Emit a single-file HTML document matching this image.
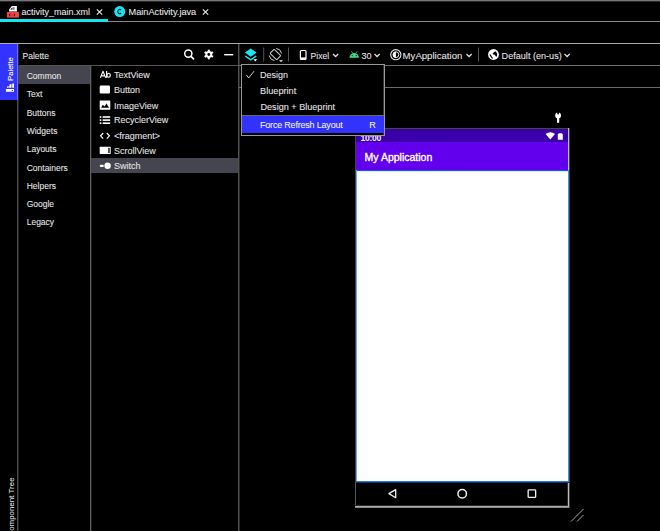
<!DOCTYPE html>
<html><head><meta charset="utf-8">
<style>
html,body{margin:0;padding:0;background:#000;width:660px;height:531px;overflow:hidden;position:relative;font-family:"Liberation Sans",sans-serif;}
.a{position:absolute;}
.t{position:absolute;white-space:pre;line-height:normal;color:#e4e4e4;-webkit-text-stroke:0.08px currentColor;}
.hl{position:absolute;height:1px;}
.vl{position:absolute;width:1px;}
svg{position:absolute;overflow:visible;}
</style></head><body>

<!-- top line -->
<div class="hl" style="left:0;top:0;width:660px;background:#777"></div>
<div class="hl" style="left:0;top:1px;width:660px;background:#2a2a2a"></div>

<!-- tab 1 -->
<svg style="left:0;top:0" width="30" height="22">
  <path d="M9 9.6L11.9 6.1H16.9V11.6H9z" fill="#fff"/>
  <path d="M10.3 9.5L12.5 7.2V9.5z" fill="#000"/>
  <rect x="13.5" y="7.2" width="0.8" height="2.6" fill="#000"/>
  <rect x="6.9" y="12" width="12" height="5.6" fill="#ee4646"/>
  <path d="M10.2 13.6l-0.9 1.3l0.9 1.3M13.9 13.6l0.9 1.3l-0.9 1.3" stroke="#3a0000" stroke-width="0.9" fill="none"/>
  <rect x="11.7" y="14.4" width="0.7" height="1" fill="#7a1010"/>
</svg>
<div class="t" style="left:21.5px;top:7px;font-size:9px;color:#e6e6e6">activity_main.xml</div>
<svg style="left:0;top:0" width="220" height="22">
  <path d="M96.8 9.3l5.4 5.4M102.2 9.3l-5.4 5.4" stroke="#f2f2f2" stroke-width="1.05"/>
  <circle cx="119.7" cy="11.6" r="5.5" fill="#18e6f2"/>
  <path d="M121.2 10.1a2.05 2.05 0 1 0 0 3" stroke="#003840" stroke-width="1.3" fill="none"/>
  <path d="M202.8 9.3l5.4 5.4M208.2 9.3l-5.4 5.4" stroke="#f2f2f2" stroke-width="1.05"/>
</svg>
<div class="t" style="left:128.5px;top:7px;font-size:9.2px;color:#e6e6e6">MainActivity.java</div>
<div class="a" style="left:0;top:19px;width:108px;height:3px;background:#18e4f0"></div>
<div class="hl" style="left:108px;top:21px;width:552px;background:#888"></div>

<!-- line under empty strip -->
<div class="hl" style="left:0;top:43px;width:660px;background:#aaa"></div>

<!-- blue side tab -->
<div class="a" style="left:0;top:44px;width:18px;height:56px;background:#3333ff"></div>
<div class="t" style="left:9.7px;top:68.7px;font-size:7.6px;color:#fff;transform:translate(-50%,-50%) rotate(-90deg);transform-origin:center">Palette</div>
<svg style="left:0;top:0" width="20" height="100">
  <rect x="5.9" y="89" width="8.1" height="2.7" rx="0.3" fill="#fff"/>
  <circle cx="12.4" cy="90.35" r="0.65" fill="#3333ff"/>
  <path d="M12.2 83.6h1.8v4.1h-1.8z" fill="#fff"/>
  <path d="M9.9 83.9l1.7 0.5l-0.2 3.3h-2.6z" fill="#fff"/>
  <path d="M7.6 85.9l1.3 0.5l-0.5 1.3h-1.6z" fill="#fff"/>
</svg>
<div class="t" style="left:10.6px;top:506.8px;font-size:7.95px;color:#ddd;transform:translate(-50%,-50%) rotate(-90deg);transform-origin:center">Component Tree</div>

<!-- palette panel lines -->
<div class="vl" style="left:17px;top:44px;height:487px;background:rgba(255,255,255,0.3)"></div>
<div class="vl" style="left:238px;top:44px;height:487px;background:#505050"></div><div class="vl" style="left:239px;top:44px;height:487px;background:#262626"></div>
<div class="hl" style="left:18px;top:65px;width:220px;background:#555"></div>
<div class="vl" style="left:90px;top:66px;height:465px;background:#606060"></div><div class="vl" style="left:91px;top:66px;height:465px;background:#1c1c1c"></div><div class="vl" style="left:18px;top:44px;height:487px;background:#222"></div>

<div class="t" style="left:22.5px;top:51px;font-size:8.5px">Palette</div>
<svg style="left:0;top:0" width="240" height="66">
  <circle cx="188.3" cy="53.6" r="3.6" stroke="#fff" stroke-width="1.5" fill="none"/>
  <path d="M190.8 56.2l3.2 3.2" stroke="#fff" stroke-width="1.7"/>
  <g transform="translate(208.8 54.5)">
    <circle r="3.4" fill="#fff"/>
    <path d="M-1 -4.8h2v9.6h-2z" fill="#fff" transform="rotate(0)"/>
    <path d="M-1 -4.8h2v9.6h-2z" fill="#fff" transform="rotate(60)"/>
    <path d="M-1 -4.8h2v9.6h-2z" fill="#fff" transform="rotate(120)"/>
    <circle r="1.4" fill="#000"/>
  </g>
  <rect x="224.2" y="54" width="9" height="1.4" fill="#fff"/>
</svg>

<!-- categories -->
<div class="a" style="left:18px;top:66px;width:72px;height:18px;background:#45454f"></div>
<div class="t" style="left:26.7px;top:70.8px;font-size:8.5px">Common</div>
<div class="t" style="left:26.7px;top:89.1px;font-size:8.5px">Text</div>
<div class="t" style="left:26.7px;top:107.9px;font-size:8.5px">Buttons</div>
<div class="t" style="left:26.7px;top:126.1px;font-size:8.5px">Widgets</div>
<div class="t" style="left:26.7px;top:144.3px;font-size:8.5px">Layouts</div>
<div class="t" style="left:26.7px;top:162.5px;font-size:8.5px">Containers</div>
<div class="t" style="left:26.7px;top:180.7px;font-size:8.5px">Helpers</div>
<div class="t" style="left:26.7px;top:198.9px;font-size:8.5px">Google</div>
<div class="t" style="left:26.7px;top:217.1px;font-size:8.5px">Legacy</div>

<!-- widgets list -->
<div class="a" style="left:91px;top:158px;width:147px;height:15px;background:#45454f"></div>
<svg style="left:0;top:0" width="120" height="80">
  <path d="M100.4 77.7L103 71.3L105.6 77.7M101.5 75.8H104.5" stroke="#f4f4f4" stroke-width="1.15" fill="none" stroke-linejoin="round"/>
  <path d="M106.6 70.9V77.7" stroke="#f4f4f4" stroke-width="1.2"/>
  <ellipse cx="108.6" cy="75.3" rx="1.75" ry="1.95" stroke="#f4f4f4" stroke-width="1.2" fill="none"/>
</svg>
<div class="t" style="left:114px;top:69.6px;font-size:9px">TextView</div>
<div class="t" style="left:114px;top:85.3px;font-size:9px">Button</div>
<div class="t" style="left:114px;top:100.5px;font-size:9px">ImageView</div>
<div class="t" style="left:114px;top:115.2px;font-size:9px">RecyclerView</div>
<div class="t" style="left:114px;top:130.5px;font-size:9px">&lt;fragment&gt;</div>
<div class="t" style="left:114px;top:145.8px;font-size:9px">ScrollView</div>
<div class="t" style="left:114px;top:160.6px;font-size:9px">Switch</div>
<svg style="left:0;top:0" width="240" height="175">
  <rect x="99.7" y="85.6" width="10.3" height="7.8" rx="1.2" fill="#fff"/>
  <rect x="99.7" y="100.4" width="10.6" height="9.4" rx="0.6" fill="#fff"/>
  <path d="M101.1 107.7L102.8 104.8L104.5 106.5L106.5 103.6L109 107.7z" fill="#000"/>
  <rect x="99.7" y="116.2" width="1.6" height="1.6" fill="#fff"/>
  <rect x="99.7" y="119.3" width="1.6" height="1.6" fill="#fff"/>
  <rect x="99.7" y="122.4" width="1.6" height="1.6" fill="#fff"/>
  <rect x="102.6" y="116.2" width="7.6" height="1.6" fill="#fff"/>
  <rect x="102.6" y="119.3" width="7.6" height="1.6" fill="#fff"/>
  <rect x="102.6" y="122.4" width="7.6" height="1.6" fill="#fff"/>
  <path d="M103.2 133l-2.6 2.8l2.6 2.8M106.8 133l2.6 2.8l-2.6 2.8" stroke="#fff" stroke-width="1.2" fill="none"/>
  <rect x="99.7" y="146.7" width="11" height="7.4" rx="0.5" fill="#fff"/>
  <rect x="108.3" y="147.8" width="1.3" height="5.2" fill="#000"/>
  <rect x="99.8" y="164.8" width="4" height="2.2" rx="1" fill="#fff"/>
  <circle cx="107.6" cy="165.7" r="3.2" fill="#fff"/>
</svg>

<!-- design toolbar -->
<div class="hl" style="left:239px;top:65px;width:421px;background:#6e6e6e"></div>
<div class="hl" style="left:239px;top:87px;width:421px;background:#6a6a6a"></div>
<svg style="left:0;top:0" width="660" height="66">
  <path d="M250.75 48.4L256.6 52.6L250.75 56.8L244.9 52.6z" fill="#18e6f2"/>
  <path d="M245.3 56L250.75 59.9L256.2 56" stroke="#18e6f2" stroke-width="1.5" fill="none"/>
  <path d="M253.4 59.2h3.8l-1.9 2.2z" fill="#fff"/>
  <rect x="263.2" y="47.5" width="1" height="14" fill="#555"/>
  <g transform="translate(275.4 54.5) rotate(-46)">
    <rect x="-2.9" y="-4.6" width="5.8" height="9.2" rx="0.6" fill="none" stroke="#ccc" stroke-width="1"/>
  </g>
  <path d="M276.3 48.4a6.2 6.2 0 0 1 5.3 5.1M274.5 60.6a6.2 6.2 0 0 1 -5.3 -5.1" stroke="#ccc" stroke-width="1" fill="none"/>
  <path d="M279 60.2h4l-2 1.8z" fill="#fff"/>
  <rect x="288" y="47.5" width="1" height="14" fill="#555"/>
  <rect x="300.4" y="50.5" width="5.6" height="8.8" rx="0.9" fill="none" stroke="#fff" stroke-width="1.2"/>
  <rect x="300.4" y="57.4" width="5.6" height="1.9" fill="#fff"/>
  <path d="M333 54.1l2.6 2.4l2.6-2.4" stroke="#e0e0e0" stroke-width="1.3" fill="none"/>
  <path d="M349.5 57.8a4.7 4.7 0 0 1 9.4 0z" fill="#3ddc84"/>
  <path d="M351.3 51.3l1.3 1.8M357.1 51.3l-1.3 1.8" stroke="#3ddc84" stroke-width="0.8"/>
  <circle cx="352.2" cy="55.6" r="0.6" fill="#000"/>
  <circle cx="356.2" cy="55.6" r="0.6" fill="#000"/>
  <path d="M374.5 54.1l2.6 2.4l2.6-2.4" stroke="#e0e0e0" stroke-width="1.3" fill="none"/>
  <circle cx="395.8" cy="54.7" r="5.1" stroke="#e8e8e8" stroke-width="1.1" fill="none"/>
  <circle cx="395.9" cy="54.7" r="2.9" stroke="#fff" stroke-width="0.9" fill="none"/>
  <path d="M395.9 51.8a2.9 2.9 0 0 0 0 5.8z" fill="#fff"/>
  <path d="M466.5 54.1l2.6 2.4l2.6-2.4" stroke="#e0e0e0" stroke-width="1.3" fill="none"/>
  <rect x="478" y="47.5" width="1" height="14" fill="#555"/>
  <circle cx="493.5" cy="54.5" r="5.4" fill="#fff"/>
  <path d="M492.5 53.8L494.2 52.1L495.5 51.3L496.5 52.4L497.2 54.1L496.9 56.2L496.2 56.8L495.2 55.5L494.2 54.5L493.2 54.5z" fill="#000"/>
  <path d="M489.8 54.5L492.5 58.5" stroke="#000" stroke-width="1.3"/>
  <path d="M564.5 54.1l2.6 2.4l2.6-2.4" stroke="#e0e0e0" stroke-width="1.3" fill="none"/>
</svg>
<div class="t" style="left:310.5px;top:50.5px;font-size:8.6px">Pixel</div>
<div class="t" style="left:361.5px;top:50.5px;font-size:9px">30</div>
<div class="t" style="left:402.6px;top:49.8px;font-size:9.6px">MyApplication</div>
<div class="t" style="left:501.6px;top:50.5px;font-size:9.1px">Default (en-us)</div>

<!-- device frame -->
<svg style="left:0;top:0" width="660" height="531">
  <circle cx="558.1" cy="115.4" r="2.9" fill="#fff"/><rect x="557" y="116.5" width="2.2" height="6.3" fill="#fff"/><path d="M557.2 112v1.6a0.9 0.9 0 0 0 1.8 0v-1.6z" fill="#000"/>
</svg>
<div class="a" style="left:355px;top:128px;width:214px;height:379px;background:#000"></div>
<div class="hl" style="left:355px;top:128px;width:214px;background:#4a4a3a"></div>
<div class="vl" style="left:355px;top:128px;height:354px;background:#4a4236"></div><div class="vl" style="left:355px;top:482px;height:25px;background:#585858"></div>
<div class="vl" style="left:568px;top:128px;height:379px;background:#bbb"></div>
<div class="hl" style="left:355px;top:506px;width:214px;background:#aaa"></div><div class="hl" style="left:355px;top:507px;width:215px;background:#8a8a8a"></div><div class="hl" style="left:355px;top:505px;width:213px;background:#2a2a2a"></div><div class="vl" style="left:569px;top:128px;height:380px;background:#3c3c3c"></div><div class="vl" style="left:567px;top:483px;height:23px;background:#2a2a2a"></div>
<div class="a" style="left:356px;top:129px;width:212px;height:13px;background:#3a00aa"></div>
<div class="t" style="left:360.6px;top:133.2px;font-size:8.6px;letter-spacing:-0.3px;color:#f4f0ff;font-weight:bold;-webkit-text-stroke:0">10:00</div>
<svg style="left:0;top:0" width="660" height="531">
  <path d="M545.6 134a7 7 0 0 1 9.4 0l-4.7 5.6z" fill="#fff"/>
  <path d="M557.8 139.8v-5.6l1.1-1h2.8l1.1 1v5.6z" fill="#fff"/>
</svg>
<div class="a" style="left:356px;top:142px;width:212px;height:28px;background:#6200ee"></div>
<div class="t" style="left:364.6px;top:150.5px;font-size:10.5px;color:#fff;-webkit-text-stroke:0.35px #fff">My Application</div>
<div class="a" style="left:356px;top:170px;width:212px;height:312px;background:#fff"></div>
<div class="hl" style="left:356px;top:170px;width:212px;background:#2a50f0"></div>
<div class="hl" style="left:356px;top:171px;width:212px;background:#c8f4ff"></div>
<div class="vl" style="left:356px;top:170px;height:312px;background:#60b0ff"></div>
<div class="vl" style="left:568px;top:170px;height:313px;background:#3a96f0"></div>
<div class="hl" style="left:356px;top:481px;width:213px;background:#2a78e0"></div>
<div class="hl" style="left:356px;top:482px;width:213px;background:#103070"></div>
<svg style="left:0;top:0" width="660" height="531">
  <path d="M395.7 489.6V497.7L388.9 493.6z" stroke="#f0f0f0" stroke-width="1.3" stroke-linejoin="round" fill="none"/>
  <circle cx="462.2" cy="493.7" r="4.25" stroke="#f0f0f0" stroke-width="1.5" fill="none"/>
  <rect x="528.15" y="489.95" width="7.5" height="7.5" rx="0.8" stroke="#f0f0f0" stroke-width="1.3" fill="none"/>
  <path d="M571 521.5l12.5-12.5M577 521.5l6.5-6.5" stroke="#aaa" stroke-width="1"/>
</svg>

<!-- dropdown menu -->
<div class="a" style="left:241px;top:64px;width:144px;height:72px;box-sizing:border-box;border:1px solid #999;background:#000"></div><div class="vl" style="left:383px;top:65px;height:70px;background:#333"></div>
<div class="hl" style="left:242px;top:115px;width:142px;background:#6a6a6a"></div>
<div class="a" style="left:242px;top:116px;width:142px;height:17px;background:#3333ff"></div>
<svg style="left:0;top:0" width="400" height="140">
  <path d="M246.3 74.8l2.4 3.2l5.3-6.8" stroke="#ccc" stroke-width="1" fill="none"/>
</svg>
<div class="t" style="left:260px;top:70.4px;font-size:9px">Design</div>
<div class="t" style="left:260px;top:85.7px;font-size:9.2px">Blueprint</div>
<div class="t" style="left:260.5px;top:101.6px;font-size:9.1px">Design + Blueprint</div>
<div class="t" style="left:260px;top:120.3px;font-size:9px;letter-spacing:-0.2px;color:#eee">Force Refresh Layout</div>
<div class="t" style="left:369.2px;top:120.3px;font-size:9px;color:#eee">R</div>

</body></html>
